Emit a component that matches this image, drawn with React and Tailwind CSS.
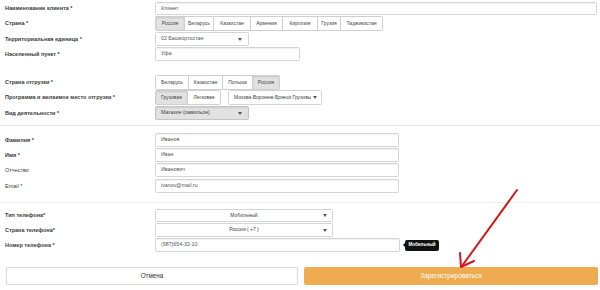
import React from 'react';

const font = "font-['Liberation_Sans',Arial,sans-serif]";

function Caret({ className = '' }) {
  return (
    <svg width="4" height="3" viewBox="0 0 4 3" className={className}>
      <path d="M0 0h4L2 3z" fill="#555" />
    </svg>
  );
}

function Row({ label, bold = true, className = '', children }) {
  return (
    <div className={`flex items-center ${className}`}>
      <div className={`w-[155px] pl-[5px] text-[5.5px] text-[#3a3a3a] ${bold ? 'font-bold' : 'font-normal'}`}>
        {label}
      </div>
      {children}
    </div>
  );
}

function Input({ value, w, h = 'h-[14px]' }) {
  return (
    <div className={`${w} ${h} flex items-center rounded-[1.5px] border border-[#d4d4d4] bg-white pl-[5px] text-[5.3px] text-[#555] shadow-[inset_0_1px_1px_rgba(0,0,0,0.06)]`}>
      {value}
    </div>
  );
}

function Group({ items, h = 'h-[15px]' }) {
  return (
    <div className={`flex ${h}`}>
      {items.map(([text, w, active], i) => (
        <div
          key={text}
          className={`${w} flex items-center justify-center border border-[#cfcfcf] text-[5px] text-[#444] ${
            i > 0 ? '-ml-px' : ''
          } ${i === 0 ? 'rounded-l-[1.5px]' : ''} ${i === items.length - 1 ? 'rounded-r-[1.5px]' : ''} ${
            active ? 'bg-[#e2e2e2] shadow-[inset_0_1px_2px_rgba(0,0,0,0.12)]' : 'bg-white'
          }`}
        >
          {text}
        </div>
      ))}
    </div>
  );
}

export default function App() {
  return (
    <div className={`relative w-[600px] h-[290px] overflow-hidden bg-white ${font}`}>
      <div className="flex flex-col pt-[2px]">
        <Row label="Наименование клиента *">
          <Input value="Клиент" w="w-[442px]" h="h-[13px]" />
        </Row>
        <Row label="Страна *" className="mt-[1px]">
          <Group
            items={[
              ['Россия', 'w-[30px]', true],
              ['Беларусь', 'w-[30px]'],
              ['Казахстан', 'w-[38px]'],
              ['Армения', 'w-[33px]'],
              ['Киргизия', 'w-[36px]'],
              ['Грузия', 'w-[24px]'],
              ['Таджикистан', 'w-[43px]'],
            ]}
          />
        </Row>
        <Row label="Территориальная единица *" className="mt-[1px]">
          <div className="w-[94px] h-[14px] flex items-center justify-between rounded-[1.5px] border border-[#d4d4d4] bg-white pl-[5px] pr-[6px] text-[5.3px] text-[#555]">
            <span>02 Башкортостан</span>
            <Caret />
          </div>
        </Row>
        <Row label="Населенный пункт *" className="mt-[1px]">
          <Input value="Уфа" w="w-[145px]" />
        </Row>

        <Row label="Страна отгрузки *" className="mt-[14px]">
          <Group
            items={[
              ['Беларусь', 'w-[34px]'],
              ['Казахстан', 'w-[35px]'],
              ['Польша', 'w-[31px]'],
              ['Россия', 'w-[28px]', true],
            ]}
          />
        </Row>
        <Row label="Программа и желаемое место отгрузки *">
          <Group
            items={[
              ['Грузовая', 'w-[33px]', true],
              ['Легковая', 'w-[34px]'],
            ]}
          />
          <div className="ml-[7px] w-[94px] h-[15px] flex items-center justify-between overflow-hidden rounded-[1.5px] border border-[#d4d4d4] bg-white pl-[5px] pr-[4px] text-[5px] text-[#444]">
            <span className="whitespace-nowrap overflow-hidden">Москва-Воронеж-Брянск Грузовы</span>
            <Caret className="ml-[2px] shrink-0" />
          </div>
        </Row>
        <Row label="Вид деятельности *" className="mt-[1px]">
          <div className="w-[94px] h-[14px] flex items-center justify-between rounded-[1.5px] border border-[#c4c4c4] bg-[#e2e2e2] pl-[5px] pr-[6px] text-[5.3px] text-[#444] shadow-[inset_0_1px_2px_rgba(0,0,0,0.1)]">
            <span>Магазин (павильон)</span>
            <Caret />
          </div>
        </Row>

        <div className="mt-[5px] h-px bg-[#e6e6e6]" />

        <Row label="Фамилия *" className="mt-[7px]">
          <Input value="Иванов" w="w-[244px]" />
        </Row>
        <Row label="Имя *" className="mt-[1px]">
          <Input value="Иван" w="w-[244px]" />
        </Row>
        <Row label="Отчество" bold={false} className="mt-[1px]">
          <Input value="Иванович" w="w-[244px]" />
        </Row>
        <Row label="Email *" bold={false} className="mt-[2px]">
          <Input value="ivanov@mail.ru" w="w-[244px]" />
        </Row>

        <div className="mt-[9px] h-px bg-[#f0f0f0]" />

        <Row label="Тип телефона*" className="mt-[6px]">
          <div className="relative w-[178px] h-[13px] flex items-center justify-center rounded-[1.5px] border border-[#d4d4d4] bg-white text-[5px] text-[#444]">
            <span>Мобильный</span>
            <Caret className="absolute right-[5px]" />
          </div>
        </Row>
        <Row label="Страна телефона*" className="mt-[1px]">
          <div className="relative w-[178px] h-[14px] flex items-center justify-center rounded-[1.5px] border border-[#d4d4d4] bg-white text-[5px] text-[#444]">
            <span>Россия ( +7 )</span>
            <Caret className="absolute right-[5px]" />
          </div>
        </Row>
        <Row label="Номер телефона *" className="mt-[1px]">
          <Input value="(987)654-32-10" w="w-[245px]" h="h-[14px]" />
          <div className="relative ml-[5px] h-[11px] w-[34px] flex items-center justify-center rounded-[2px] bg-[#111] text-[4.5px] font-bold text-white">
            <span className="absolute -left-[2px] top-[3.5px] h-0 w-0 border-y-[2px] border-r-[2px] border-y-transparent border-r-[#111]" />
            Мобильный
          </div>
        </Row>

        <div className="mt-[15px] flex gap-[6px] px-[6px] pr-[2px]">
          <div className="flex h-[18px] w-[292px] items-center justify-center rounded-[2px] border border-[#d9d9d9] bg-white text-[6.3px] text-[#333]">
            Отмена
          </div>
          <div className="flex h-[18px] flex-1 items-center justify-center rounded-[2px] bg-[#efab4f] text-[6.5px] text-white">
            Зарегистрироваться
          </div>
        </div>
      </div>

      <svg className="absolute left-0 top-0" width="600" height="290" viewBox="0 0 600 290">
        <path d="M517 190 L462 266" stroke="#d41820" strokeWidth="2" strokeLinecap="round" fill="none" />
        <path d="M460 253 L461 267 L474 261" stroke="#d41820" strokeWidth="2" strokeLinecap="round" strokeLinejoin="round" fill="none" />
      </svg>
    </div>
  );
}
